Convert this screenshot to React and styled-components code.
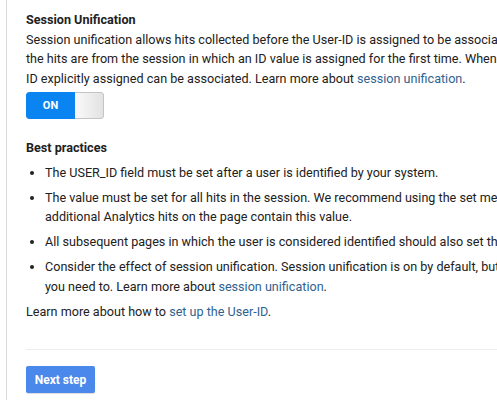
import React from "react";
import styled, { createGlobalStyle } from "styled-components";

const Global = createGlobalStyle`
  html, body { margin: 0; padding: 0; background: #fff; overflow: hidden; }
  body { font-family: Roboto, "Noto Sans", Arial, sans-serif; color: #212121; }
`;

const Frame = styled.div`
  margin-left: 6px;
  border-left: 1px solid #dadada;
  padding: 10px 0 20px 19px;
  width: 760px;
  height: 400px;
  box-sizing: border-box;
`;

const Heading = styled.h3`
  margin: 0;
  font-size: 12.6px;
  font-weight: 700;
  line-height: 19.5px;
`;

const Para = styled.p`
  margin: 0;
  font-size: 12.6px;
  line-height: 19.5px;
  white-space: nowrap;
`;

const Link = styled.a`
  color: #30628f;
  text-decoration: none;
`;

const Toggle = styled.div`
  display: flex;
  width: 78px;
  height: 27px;
  margin-top: 4px;
  border-radius: 3px;
  overflow: hidden;
  box-sizing: border-box;
`;

const ToggleOn = styled.div`
  width: 49px;
  background: #0a84f0;
  color: #fff;
  font-size: 11px;
  font-weight: 700;
  display: flex;
  align-items: center;
  justify-content: center;
  border-radius: 3px 0 0 3px;
`;

const ToggleKnob = styled.div`
  flex: 1;
  background: linear-gradient(to right, #fafafa, #e2e2e2);
  border: 1px solid #c4c4c4;
  border-left: none;
  border-radius: 0 3px 3px 0;
`;

const Section = styled.div`
  margin-top: ${(p) => p.$top || 0}px;
`;

const List = styled.ul`
  margin: 5px 0 0;
  padding-left: 19px;
  font-size: 12.6px;
  line-height: 19.5px;
  white-space: nowrap;
`;

const Item = styled.li`
  margin-bottom: 5.5px;
`;

const Divider = styled.hr`
  border: none;
  border-top: 1px solid #ececec;
  margin: 28px 0 0;
`;

const Button = styled.button`
  margin-top: 16px;
  width: 69px;
  height: 27px;
  border: none;
  border-radius: 2px;
  background: #4a88ec;
  color: #fff;
  font-family: Roboto, Arial, sans-serif;
  font-size: 12px;
  font-weight: 700;
  padding: 0;
  box-shadow: 0 1px 1px rgba(0,0,0,0.15);
`;

export default function App() {
  return (
    <>
      <Global />
      <Frame>
        <Heading>Session Unification</Heading>
        <Para>
          Session unification allows hits collected before the User-ID is assigned to be associated with the User-ID, if
          <br />
          the hits are from the session in which an ID value is assigned for the first time. When disabled, only hits with an
          <br />
          ID explicitly assigned can be associated. Learn more about <Link>session unification</Link>.
        </Para>
        <Toggle>
          <ToggleOn>ON</ToggleOn>
          <ToggleKnob />
        </Toggle>
        <Section $top={19}>
          <Heading>Best practices</Heading>
          <List>
            <Item>The USER_ID field must be set after a user is identified by your system.</Item>
            <Item>
              The value must be set for all hits in the session. We recommend using the set method so that
              <br />
              additional Analytics hits on the page contain this value.
            </Item>
            <Item>All subsequent pages in which the user is considered identified should also set this value.</Item>
            <Item>
              Consider the effect of session unification. Session unification is on by default, but you can turn it off if
              <br />
              you need to. Learn more about <Link>session unification</Link>.
            </Item>
          </List>
          <Para>
            Learn more about how to <Link>set up the User-ID</Link>.
          </Para>
        </Section>
        <Divider />
        <Button>Next step</Button>
      </Frame>
    </>
  );
}
